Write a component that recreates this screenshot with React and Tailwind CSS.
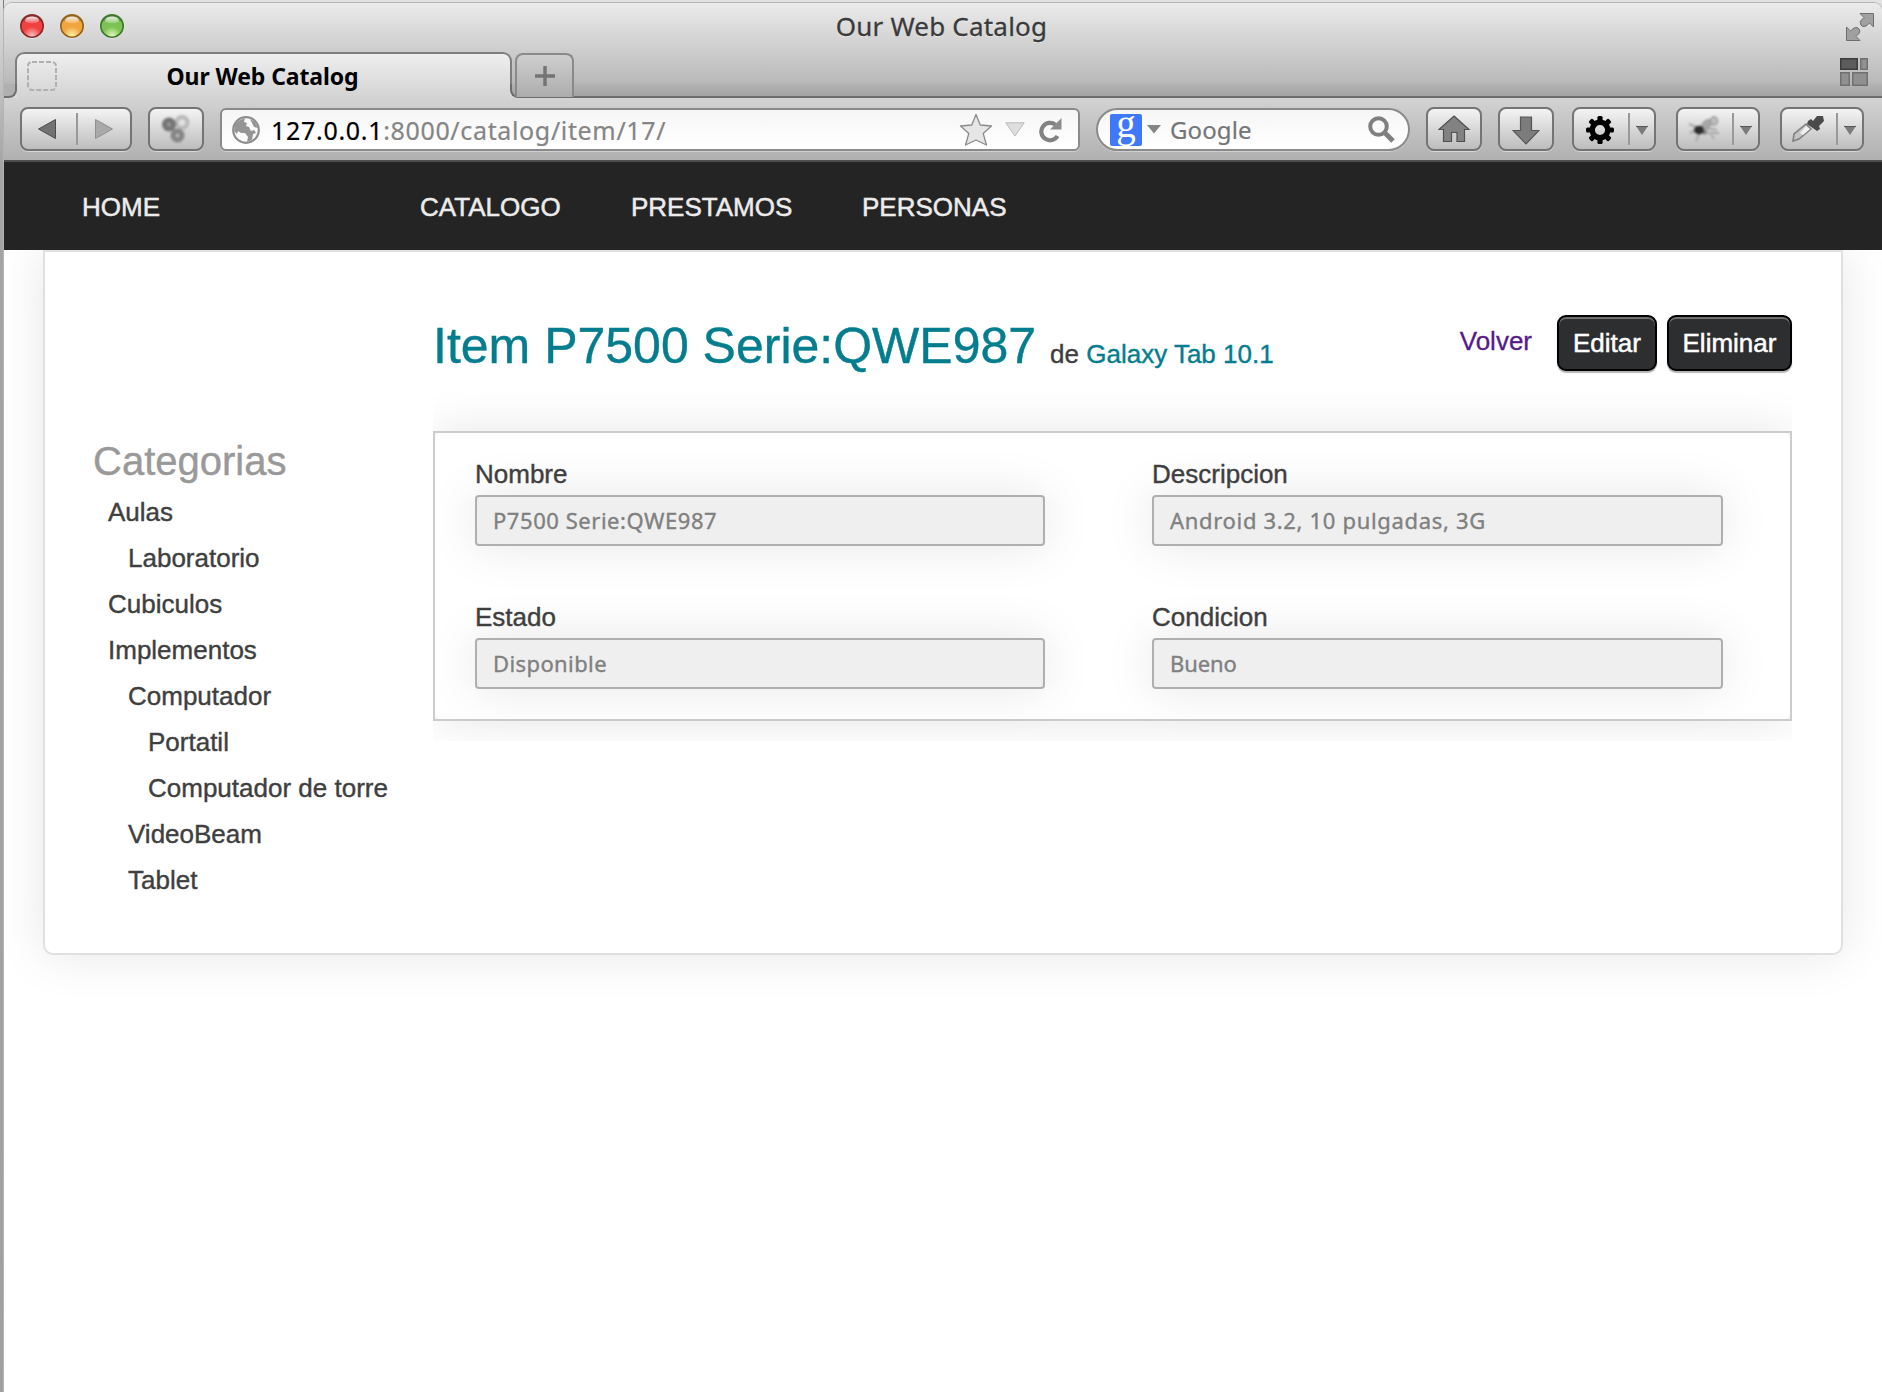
const strip = "bg-[linear-gradient(#ebebeb,#d0d0d0_45%,#bababa_82%,#a3a3a3)]";

function ToolButton({ className = "", children }) {
  return (
    <div
      className={
        "flex h-[44px] shrink-0 items-center rounded-[8px] border-2 border-[#747474] bg-linear-to-b from-[#f4f4f4] to-[#bdbdbd] shadow-[0_1px_0_#d8d8d8] " +
        className
      }
    >
      {children}
    </div>
  );
}

function Divider() {
  return <div className="h-8 w-[2px] shrink-0 bg-[#9a9a9a]" />;
}

function DownTriangle() {
  return (
    <svg width="12" height="9" viewBox="0 0 12 9" className="relative top-px">
      <path d="M0 0H12L6 9Z" fill="#7b7b7b" />
      <path d="M0 0.5H12" stroke="#5a5a5a" />
    </svg>
  );
}

function SplitButton({ className = "", children }) {
  return (
    <ToolButton className={"w-[84px] " + className}>
      <div className="flex w-[54px] justify-center pr-[2px]">{children}</div>
      <Divider />
      <div className="flex flex-1 justify-center">
        <DownTriangle />
      </div>
    </ToolButton>
  );
}

function Light({ edge, mid, low }) {
  return (
    <svg width="24" height="25" viewBox="0 0 24 25">
      <defs>
        <radialGradient id={"l" + mid.slice(1)} cx="0.5" cy="0.95" r="0.85">
          <stop offset="0" stopColor={low} />
          <stop offset="0.5" stopColor={mid} />
          <stop offset="0.85" stopColor={mid} />
          <stop offset="1" stopColor={edge} />
        </radialGradient>
        <linearGradient id={"h" + mid.slice(1)} x1="0" y1="0" x2="0" y2="1">
          <stop offset="0" stopColor="#fff" stopOpacity="0.95" />
          <stop offset="1" stopColor="#fff" stopOpacity="0.1" />
        </linearGradient>
      </defs>
      <circle cx="12" cy="13" r="11.6" fill="#f2f2f2" />
      <circle cx="12" cy="12" r="11.2" fill={"url(#l" + mid.slice(1) + ")"} stroke={edge} strokeWidth="1.6" />
      <ellipse cx="12" cy="6" rx="7" ry="3.6" fill={"url(#h" + mid.slice(1) + ")"} />
    </svg>
  );
}

const gearTeeth = [0, 45, 90, 135, 180, 225, 270, 315];

const categories = [
  ["Aulas", 0],
  ["Laboratorio", 1],
  ["Cubiculos", 0],
  ["Implementos", 0],
  ["Computador", 1],
  ["Portatil", 2],
  ["Computador de torre", 2],
  ["VideoBeam", 1],
  ["Tablet", 1],
];
const indents = ["pl-[15px]", "pl-[35px]", "pl-[55px]"];

const fields = [
  ["Nombre", "P7500 Serie:QWE987", "tracking-[0.55px]"],
  ["Descripcion", "Android 3.2, 10 pulgadas, 3G", "tracking-[0.68px]"],
  ["Estado", "Disponible", "tracking-[0.4px]"],
  ["Condicion", "Bueno", "tracking-[-0.1px]"],
];

function TitleBar() {
  return (
    <div className="flex h-[49px] items-start pl-[16px] pr-[8px]">
      <div className="flex w-[104px] gap-4 pt-[11px]">
        <Light edge="#8a2a2a" mid="#f0403f" low="#fbc3c3" />
        <Light edge="#94641c" mid="#f0a541" low="#fdf6a8" />
        <Light edge="#3f7a2c" mid="#7cc255" low="#e2fbc0" />
      </div>
      <div className="flex-1 pr-[39px] pt-[4px] text-center text-[26px] leading-[38px] tracking-[0.2px] text-[#3a3a3a] [text-shadow:0_1px_0_#f0f0f0] [-webkit-text-stroke:0.3px_#3a3a3a]">
        Our Web Catalog
      </div>
      <div className="flex w-[76px] justify-end pt-[10px]">
        <svg width="28" height="29" viewBox="0 0 28 29" fill="#a0a0a0" stroke="#6e6e6e" strokeWidth="1">
          <path d="M14 0.5H27.5V14L23.5 10L20 13Q16.500 14.500 15 12Q13.500 10 15 7.500L18 4.500Z" />
          <path d="M14 27.500H0.500V14L4.500 18L8 15Q11.500 13.500 13 16Q14.500 18 13 20.500L10 23.500Z" />
        </svg>
      </div>
    </div>
  );
}

function TabStrip() {
  return (
    <div className="flex h-[46px]">
      <div className="flex w-[11px] flex-col justify-end">
        <div className="relative z-10 h-[14px] w-[13px] bg-[#dcdcdc]">
          <div className="h-[14px] rounded-br-[8px] border-b-2 border-r-2 border-[#707070] bg-[#b0b0b0]" />
        </div>
      </div>
      <div className="relative flex w-[497px] items-center rounded-t-[9px] bg-linear-to-b from-[#f0f0f0] to-[#d3d3d3] pl-[12px]">
        <div className="absolute inset-x-0 top-0 h-8 rounded-t-[9px] border-x-2 border-t-2 border-[#7e7e7e]" />
        <svg width="30" height="30" viewBox="0 0 30 30" className="relative top-px">
          <rect x="1" y="1" width="28" height="28" rx="4" fill="none" stroke="#b0b0b0" strokeWidth="2" strokeDasharray="5 2" />
        </svg>
        <div className="w-[411px] pt-[2px] text-center text-[23px] font-bold leading-[46px] tracking-[-0.1px] text-black">
          Our Web Catalog
        </div>
      </div>
      <div className="relative z-10 -ml-[2px] flex flex-1 flex-col justify-end">
        <div className="bg-[#d8d8d8]">
          <div className="h-[14px] rounded-bl-[8px] border-b-2 border-l-2 border-[#6c6c6c] bg-linear-to-b from-[#b3b3b3] to-[#a3a3a3]" />
        </div>
        <div className="absolute left-[5px] top-px flex h-[44px] w-[59px] items-center justify-center rounded-t-[8px] border-x-2 border-t-2 border-[#8a8a8a] bg-linear-to-b from-[#cfcfcf] to-[#acacac]">
          <svg width="20" height="20" viewBox="0 0 20 20" stroke="#747474" strokeWidth="3.500">
            <path d="M10 0V20M0 10H20" />
          </svg>
        </div>
        <div className="absolute right-[14px] top-[6px]">
          <svg width="28" height="28" viewBox="0 0 28 28" fill="#909090" stroke="#707070" strokeWidth="1.500">
            <rect x="0.750" y="0.750" width="16.500" height="10.500" fill="#5c5c5c" stroke="#3c3c3c" />
            <rect x="20.750" y="0.750" width="6.500" height="10.500" />
            <rect x="0.750" y="14.750" width="8.500" height="12.500" />
            <rect x="12.750" y="14.750" width="14.500" height="12.500" />
          </svg>
        </div>
      </div>
    </div>
  );
}

function Toolbar() {
  return (
    <div className="flex h-[64px] items-start border-b-2 border-[#4e4e4e] bg-linear-to-b from-[#d3d3d3] to-[#b0b0b0] pl-[16px] pt-[9px]">
      <ToolButton className="w-[112px]">
        <div className="flex w-[54px] justify-center pr-[4px]">
          <svg width="18" height="20" viewBox="0 0 18 20">
            <path d="M0.500 10L17.500 0.500V19.500Z" fill="#727272" stroke="#4c4c4c" />
          </svg>
        </div>
        <Divider />
        <div className="flex flex-1 justify-center">
          <svg width="18" height="20" viewBox="0 0 18 20">
            <path d="M17.500 10L0.500 0.500V19.500Z" fill="#a9a9a9" stroke="#909090" />
          </svg>
        </div>
      </ToolButton>
      <ToolButton className="ml-[16px] w-[56px] justify-center">
        <svg width="30" height="30" viewBox="0 0 30 30" fill="none" className="blur-[0.9px]">
          <circle cx="21" cy="8.500" r="5.500" fill="#e0e0e0" stroke="#b8b8b8" strokeWidth="4" />
          <circle cx="8" cy="10.500" r="4.500" fill="#9a9a9a" stroke="#757575" strokeWidth="5" />
          <circle cx="16.500" cy="21.500" r="4.500" fill="#b8b8b8" stroke="#858585" strokeWidth="5" />
        </svg>
      </ToolButton>
      <div className="ml-[16px] mt-px flex h-[43px] w-[860px] items-center rounded-[6px] border-2 border-[#8a8a8a] bg-linear-to-b from-[#f6f6f6] to-white pl-[10px] pr-[15px] shadow-[0_1px_0_#d0d0d0]">
        <svg width="28" height="28" viewBox="0 0 28 28">
          <circle cx="14" cy="14" r="12.800" fill="#fafafa" stroke="#8e8e8e" strokeWidth="2.200" />
          <path d="M3 8L8 4L13 2L12 6L15 7L14 10L17 11L19 15L22 14L24 17L21 18L20 24L15 26L16 21L13 17L9 17L6 15L5 18L2 15Z" fill="#959595" />
          <path d="M18 3L23 6L26 12L22 11L20 7Z" fill="#959595" />
        </svg>
        <div className="ml-[11px] flex-1 pt-px text-[25px] leading-[38px] text-[#858585] [-webkit-text-stroke:0.2px_currentColor]">
          <span className="tracking-[0.7px] text-black">127.0.0.1</span>
          <span className="tracking-[0.65px]">:8000/catalog/item/17/</span>
        </div>
        <svg width="34" height="34" viewBox="0 0 34 34">
          <path d="M17 1.500L21.300 12L32.500 13L24.200 20.500L27.500 32L17 27L6.500 32L9.800 20.500L1.500 13L12.700 12Z" fill="#e6e6e6" stroke="#8a8a8a" strokeWidth="1.300" strokeLinejoin="round" />
        </svg>
        <svg width="20" height="15" viewBox="0 0 20 15" className="ml-[12px]">
          <path d="M0.800 0.800H19.200L10 14Z" fill="#dedede" stroke="#b9b9b9" />
        </svg>
        <svg width="24" height="26" viewBox="0 0 24 26" className="ml-[14px]">
          <path d="M16.500 7.800A8.700 8.700 0 1 0 18.500 19" fill="none" stroke="#828282" strokeWidth="4.200" />
          <path d="M22.500 1V12.500H11Z" fill="#8c8c8c" />
        </svg>
      </div>
      <div className="ml-[16px] mt-px flex h-[43px] w-[314px] items-center rounded-full border-2 border-[#8a8a8a] bg-linear-to-b from-[#f6f6f6] to-white pl-[12px] pr-[13px] shadow-[0_1px_0_#d0d0d0]">
        <div className="flex h-8 w-8 items-center justify-center rounded-[2px] bg-[#3f78fb]">
          <span className="relative -top-[6px] font-['Liberation_Serif',serif] text-[39px] leading-[48px] text-white">g</span>
        </div>
        <svg width="14" height="9" viewBox="0 0 14 9" className="ml-[5px]">
          <path d="M0 0H14L7 8.500Z" fill="#858585" />
        </svg>
        <div className="ml-[9px] flex-1 pt-px text-[24px] leading-[38px] tracking-[0.1px] text-[#757575] [-webkit-text-stroke:0.2px_currentColor]">
          Google
        </div>
        <svg width="27" height="27" viewBox="0 0 27 27" fill="none" stroke="#7f7f7f">
          <circle cx="10.500" cy="10.500" r="8.300" strokeWidth="4" />
          <path d="M16.500 16.500L25 25" strokeWidth="5" />
        </svg>
      </div>
      <ToolButton className="ml-[16px] w-[56px] justify-center">
        <svg width="32" height="28" viewBox="0 0 32 28">
          <path d="M16 1L31 14.500H26.500V26.500H19V17.500H13.500V26.500H5.500V14.500H1Z" fill="#828282" stroke="#505050" strokeWidth="1.200" />
        </svg>
      </ToolButton>
      <ToolButton className="ml-[16px] w-[56px] justify-center">
        <svg width="28" height="29" viewBox="0 0 28 29" className="relative top-px">
          <path d="M8.500 1H19.500V14.500H27L14 28L1 14.500H8.500Z" fill="#7c7c7c" stroke="#565656" strokeWidth="1.200" />
        </svg>
      </ToolButton>
      <SplitButton className="ml-[18px]">
        <svg width="28" height="28" viewBox="-14 -14 28 28" className="relative top-px">
          {gearTeeth.map((a) => (
            <rect key={a} x="-2.600" y="-14" width="5.200" height="8" rx="1.500" transform={"rotate(" + a + ")"} />
          ))}
          <circle r="7.800" fill="none" stroke="#000" strokeWidth="5.400" />
        </svg>
      </SplitButton>
      <SplitButton className="ml-[20px]">
        <svg width="34" height="28" viewBox="0 0 34 28" fill="none" className="blur-[0.9px]">
          <path d="M2 9L9 12M3 18L9 15M9 26L13 17M18 18L32 18M19 13L30 15M24 20L27 24" stroke="#a6a6a6" strokeWidth="2" />
          <ellipse cx="20" cy="9" rx="6" ry="3.500" transform="rotate(-35 20 9)" fill="#a8a8a8" stroke="#909090" />
          <ellipse cx="27" cy="6" rx="3.500" ry="4" fill="#c0c0c0" stroke="#999" strokeWidth="1.500" />
          <path d="M12 17L21 14L18 20Z" fill="#808080" />
          <ellipse cx="12" cy="15" rx="5" ry="4.300" fill="#2c2c2c" />
        </svg>
      </SplitButton>
      <SplitButton className="ml-[20px]">
        <svg width="34" height="28" viewBox="0 0 34 28" className="blur-[0.6px]">
          <path d="M2 26L3 19L15 9L20 14L8 24Z" fill="#c4c4c4" stroke="#808080" strokeWidth="1.600" />
          <path d="M9 18L15 11L19 14L12 20Z" fill="#f0f0f0" />
          <path d="M17 6L20 4L22 6L26 1L32 1L33 6L28 11L29 14L26 16L16 9Z" fill="#4a4a4a" />
        </svg>
      </SplitButton>
    </div>
  );
}

function DarkButton({ className, children }) {
  return (
    <button
      className={
        "h-[56px] rounded-[9px] border-2 border-black bg-[#2d2e30] text-center text-[26px] leading-[52px] text-white shadow-[inset_0_2px_0_#6c6e70,0_2px_1px_#b5b5b5] [-webkit-text-stroke:0.5px_white] " +
        className
      }
    >
      {children}
    </button>
  );
}

function Page() {
  return (
    <div className="flex flex-1 flex-col bg-white font-['Liberation_Sans',Arial,sans-serif] text-[26px] text-[#3f3f3f]">
      <nav className="z-10 flex h-[88px] shrink-0 items-center bg-[#242424] pl-[78px] pt-[2px] text-[#ececec] [-webkit-text-stroke:0.5px_#ececec]">
        <div className="w-[338px]">HOME</div>
        <div className="w-[211px]">CATALOGO</div>
        <div className="w-[231px]">PRESTAMOS</div>
        <div>PERSONAS</div>
      </nav>
      <main className="ml-[39px] flex h-[705px] w-[1800px] rounded-b-[10px] border-2 border-[#e0e0e0] bg-white shadow-[0_0_50px_rgba(0,0,0,0.1)]">
        <aside className="w-[388px] pl-[48px] pt-[185px]">
          <h2 className="text-[40px] leading-[48px] text-[#999] [-webkit-text-stroke:0.4px_#999]">Categorias</h2>
          <ul className="mt-1 [-webkit-text-stroke:0.4px_#3f3f3f]">
            {categories.map(([name, level]) => (
              <li key={name} className={"whitespace-nowrap leading-[46px] " + indents[level]}>
                {name}
              </li>
            ))}
          </ul>
        </aside>
        <section className="w-[1359px] pt-[63px]">
          <header className="flex h-[76px] items-start">
            <h1 className="flex-1 whitespace-nowrap pt-px text-[50px] leading-[60px] text-[#047d8f] [-webkit-text-stroke:0.4px_currentColor]">
              Item P7500 Serie:QWE987
              <span className="ml-[14px] text-[26px] text-[#3f3f3f]">
                de <span className="text-[#047d8f]">Galaxy Tab 10.1</span>
              </span>
            </h1>
            <a className="mr-[25px] mt-[7px] leading-[38px] text-[#551a8b] [-webkit-text-stroke:0.3px_#551a8b]">Volver</a>
            <DarkButton className="w-[100px]">Editar</DarkButton>
            <DarkButton className="ml-[10px] w-[125px]">Eliminar</DarkButton>
          </header>
          <div className="overflow-hidden pb-[20px] pt-[40px]">
            <div className="rounded-[14px] shadow-[0_0_50px_rgba(0,0,0,0.1)]">
              <div className="grid h-[290px] grid-cols-[570px_571px] content-start gap-x-[107px] gap-y-[56px] border-2 border-[#ccc] pl-[40px] pt-[26px]">
                {fields.map(([label, value, tracking]) => (
                  <div key={label}>
                    <div className="leading-[30px] [-webkit-text-stroke:0.4px_#3f3f3f]">{label}</div>
                    <div
                      className={
                        "mt-[6px] h-[51px] rounded-[4px] border-2 border-[#afafaf] bg-[#efefef] pl-[16px] font-['Noto_Sans',sans-serif] text-[22px] leading-[47px] text-[#808080] shadow-[0_0_50px_rgba(0,0,0,0.1)] [-webkit-text-stroke:0.35px_#808080] " +
                        tracking
                      }
                    >
                      {value}
                    </div>
                  </div>
                ))}
              </div>
            </div>
          </div>
        </section>
      </main>
    </div>
  );
}

export default function App() {
  return (
    <div className="flex h-[1392px] w-[1882px] overflow-hidden bg-[#e2e2e2] pt-[3px] font-['Noto_Sans',sans-serif]">
      <div className="-mt-[3px] w-1 shrink-0 border-r border-[#7c7c7c] bg-linear-to-b from-[#e0e0e0] via-[#a4a4a4] via-12% to-[#a0a0a0]" />
      <div className="flex flex-1 flex-col overflow-hidden rounded-t-[8px] shadow-[0_0_0_1px_#b4b4b4]">
        <div className={"shrink-0 " + strip}>
          <TitleBar />
          <TabStrip />
        </div>
        <Toolbar />
        <Page />
      </div>
    </div>
  );
}
